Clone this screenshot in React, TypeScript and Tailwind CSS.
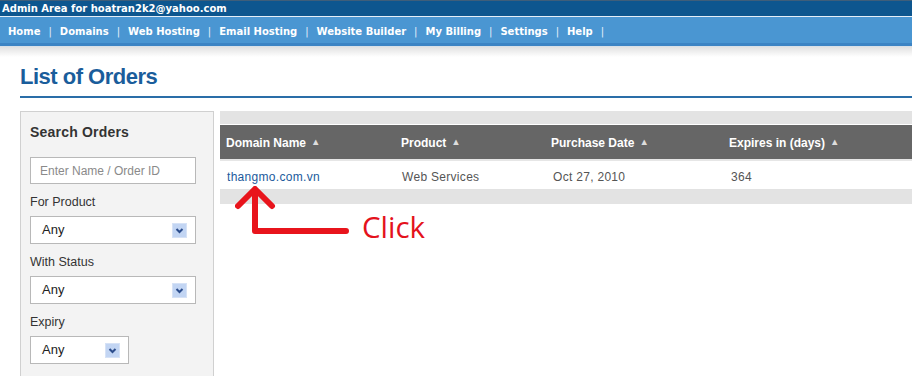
import React from 'react';

const navItems = ['Home', 'Domains', 'Web Hosting', 'Email Hosting', 'Website Builder', 'My Billing', 'Settings', 'Help'];

const columns = [
  { label: 'Domain Name', width: 'w-[175px]' },
  { label: 'Product', width: 'w-[150px]' },
  { label: 'Purchase Date', width: 'w-[178px]' },
  { label: 'Expires in (days)', width: 'flex-1' },
];

const SelectBox = ({ width }: { width: string }) => (
  <div className={`${width} h-[28px] bg-white border border-[#b8b8b8] flex items-center justify-between pl-[11px] pr-[8px]`}>
    <span className="text-[13px] text-[#222]">Any</span>
    <span className="w-[15px] h-[15px] bg-[#c2d5f3] border border-[#d6e2f6] flex items-center justify-center">
      <svg width="11" height="11" viewBox="0 0 11 11">
        <path d="M2.5 4 L5.5 7 L8.5 4" fill="none" stroke="#2c4d8c" strokeWidth="2" />
      </svg>
    </span>
  </div>
);

const Field = ({ label, width }: { label: string; width: string }) => (
  <div className="mt-[11px]">
    <div className="text-[12.5px] leading-[15px] text-[#333] mb-[6px]">{label}</div>
    <SelectBox width={width} />
  </div>
);

export default function App() {
  return (
    <div className="w-[912px] h-[376px] overflow-hidden bg-white relative font-['Liberation_Sans',Arial,sans-serif]">
      {/* top admin bar */}
      <div className="h-[16px] bg-[#0d568f] border-t border-[#3e5e7a] text-white font-['DejaVu_Sans',Verdana,sans-serif] font-bold text-[10px] leading-[15px] pl-[2px]">
        Admin Area for hoatran2k2@yahoo.com
      </div>
      <div className="h-px bg-[#e4eef8]" />
      <div className="h-[29px] bg-[#4a96d2] border-b-[3px] border-[#3c84c4] flex items-center pl-[8px] pt-[2px] text-white font-['DejaVu_Sans',Verdana,sans-serif] font-bold text-[10px]">
        {navItems.map((item) => (
          <React.Fragment key={item}>
            <span>{item}</span>
            <span className="mx-[8px] font-normal text-[#e6f0fa]">|</span>
          </React.Fragment>
        ))}
      </div>
      <div className="h-px bg-[#d8e0e8]" />
      <div className="h-[10px] bg-gradient-to-b from-[#e2e2e2] to-white" />

      <div className="pl-[20px]">
        <h1 className="mt-[7px] text-[22px] leading-[26px] font-bold tracking-[-0.5px] text-[#1a5d9b]">List of Orders</h1>
        <div className="mt-[6px] h-[2px] bg-[#2a6ea8]" />

        <div className="mt-[13px] flex gap-[6px]">
          {/* search panel */}
          <div className="w-[194px] h-[280px] shrink-0 bg-[#f3f3f3] border border-[#d0d0d0] pl-[9px] pt-[12px]">
            <div className="text-[14px] leading-[17px] font-bold text-[#333] tracking-[0.2px]">Search Orders</div>
            <div className="mt-[16px] w-[166px] h-[27px] bg-white border border-[#b8b8b8] flex items-center pl-[9px] text-[12px] text-[#8a8a8a]">
              Enter Name / Order ID
            </div>
            <Field label="For Product" width="w-[166px]" />
            <Field label="With Status" width="w-[166px]" />
            <Field label="Expiry" width="w-[99px]" />
          </div>

          {/* orders table */}
          <div className="flex-1">
            <div className="h-[13px] bg-[#e3e3e3]" />
            <div className="h-px bg-white" />
            <div className="h-[34px] bg-[#666] flex items-center pt-[1px] text-white font-bold text-[12px]">
              {columns.map((c) => (
                <div key={c.label} className={`${c.width} pl-[6px] flex items-center`}>
                  <span>{c.label}</span>
                  <span className="ml-[5px] text-[9.5px] text-[#ddd]">▲</span>
                </div>
              ))}
            </div>
            <div className="h-[2px] bg-[#e6e6e6]" />
            <div className="h-[28px] flex items-center pt-[4px] text-[12px] tracking-[0.3px] text-[#555]">
              <div className="w-[175px] pl-[7px] text-[#1b5a9c]">thangmo.com.vn</div>
              <div className="w-[150px] pl-[7px]">Web Services</div>
              <div className="w-[178px] pl-[8px]">Oct 27, 2010</div>
              <div className="flex-1 pl-[8px]">364</div>
            </div>
            <div className="h-px bg-[#e2e2e2]" />
            <div className="h-[14px] bg-[#e3e3e3]" />
          </div>
        </div>
      </div>

      {/* annotation */}
      <svg className="absolute left-0 top-0 pointer-events-none" width="912" height="376">
        <g fill="none" stroke="#e8141c" strokeWidth="6" strokeLinecap="round" strokeLinejoin="round" style={{ filter: 'blur(0.6px)' }}>
          <path d="M238 206 L255 189 L272 206" />
          <path d="M255 191 L255 231 L346 231" />
        </g>
      </svg>
      <span className="absolute left-[362px] top-[212px] text-[29.5px] leading-none text-[#e4121c] font-['Open_Sans',sans-serif]">
        Click
      </span>
    </div>
  );
}
